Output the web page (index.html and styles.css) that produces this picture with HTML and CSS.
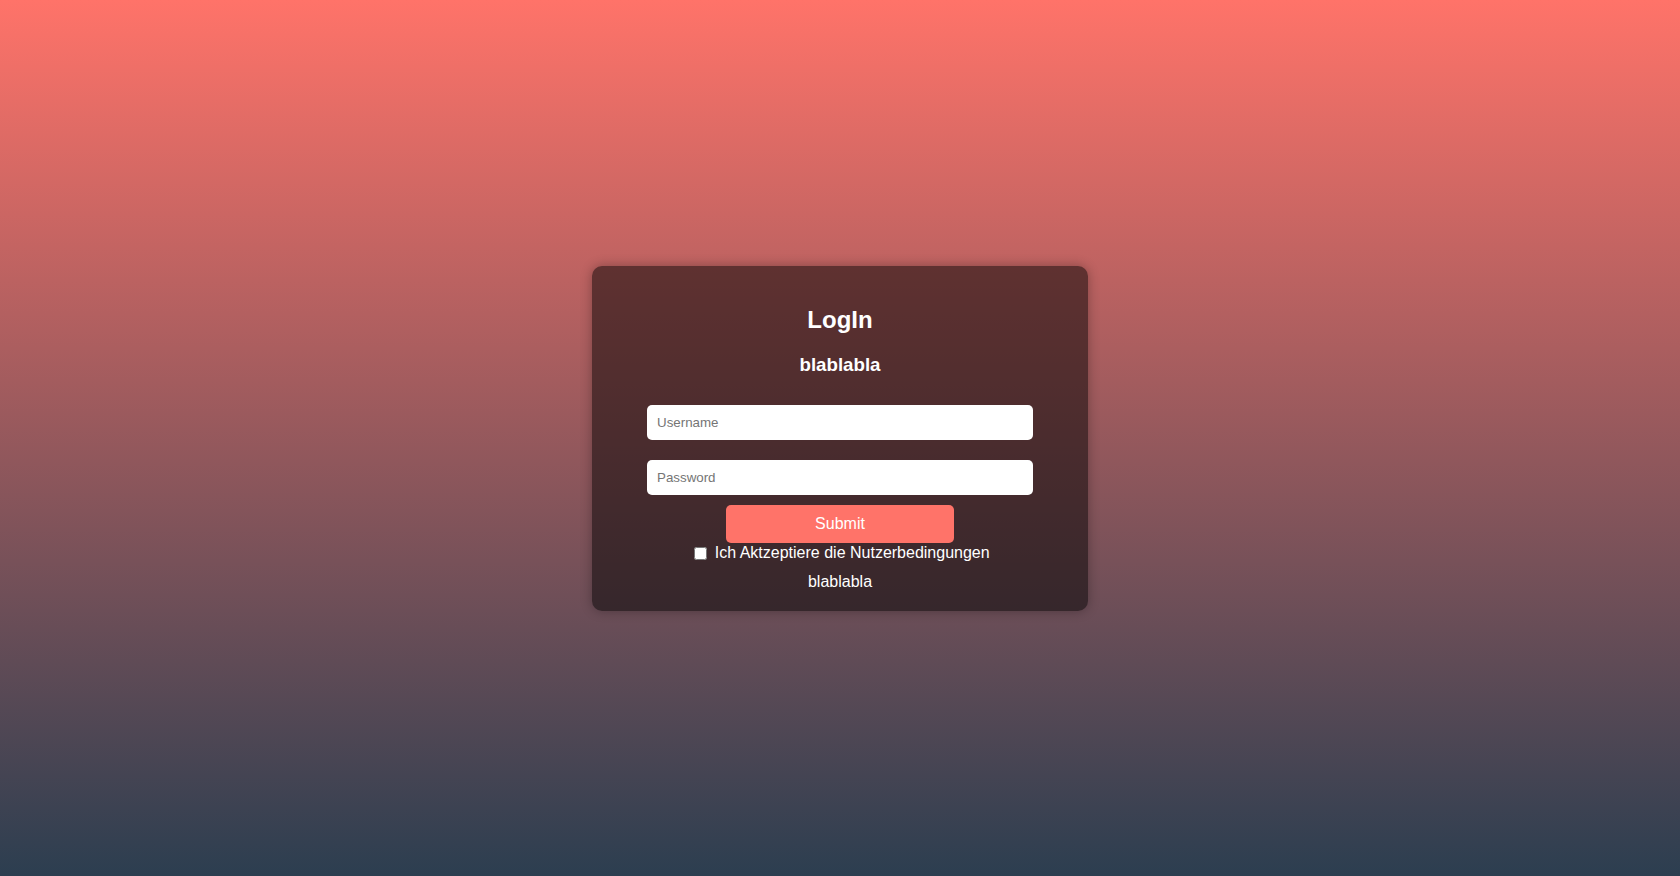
FILE: index.html
```html
<!DOCTYPE html>
<html lang="de">

<head>
  <meta charset="UTF-8">
  <title>LogIn</title>
  <link rel="stylesheet" href="styles.css">
</head>

<body class="login-body">

  <!-- Karte mit dem Formular -->
  <div class="login-card">
    <h2 class="login-title">LogIn</h2>
    <h3 class="login-subtitle">blablabla</h3>

    <form class="login-form" onsubmit="return false;">
      <input class="login-input" type="text" placeholder="Username">
      <input class="login-input login-input-last" type="password" placeholder="Password">
      <button class="login-btn" type="submit">Submit</button>
      <label class="login-terms">
        <input type="checkbox"> Ich Aktzeptiere die Nutzerbedingungen
      </label>
      <div class="login-note">blablabla</div>
    </form>
  </div>

</body>

</html>
```

FILE: styles.css
```css
/* Hintergrund mit Verlauf */
.login-body {
  margin: 0;
  height: 100vh;
  display: flex;
  align-items: center;
  justify-content: center;
  background: linear-gradient(to bottom, #ff7369, #2c3e50);
  font-family: 'Liberation Sans', Arial, sans-serif;
  color: #fff;
}

/* Karte */
.login-card {
  width: 456px;
  padding: 20px;
  background: rgba(0, 0, 0, 0.5);
  border-radius: 10px;
  box-shadow: 0 0 12px rgba(0, 0, 0, 0.3);
  text-align: center;
}

.login-title {
  font-size: 24px;
  margin: 20px 0;
}

.login-subtitle {
  font-size: 18.72px;
  margin: 20px 0 0 0;
}

.login-form {
  margin-top: 29px;
  display: flex;
  flex-direction: column;
  align-items: center;
}

.login-input {
  width: 386px;
  box-sizing: border-box;
  height: 35px;
  padding: 0 10px;
  border: none;
  border-radius: 5px;
  font-family: 'Liberation Sans', Arial, sans-serif;
  font-size: 13.33px;
  color: #333;
  background: #fff;
  margin-bottom: 20px;
}

.login-input::placeholder {
  color: #757575;
}

.login-input-last {
  margin-bottom: 10px;
}

.login-btn {
  width: 228px;
  height: 38px;
  border: none;
  border-radius: 5px;
  background-color: #ff7369;
  color: #fff;
  font-family: 'Liberation Sans', Arial, sans-serif;
  font-size: 16px;
  cursor: pointer;
}

.login-btn:hover {
  background-color: #f2645a;
}

.login-terms {
  font-size: 16px;
  line-height: 20px;
}

.login-terms input {
  margin: 3px 3px 3px 4px;
  vertical-align: -2px;
}

.login-note {
  font-size: 16px;
  margin-top: 10px;
}
```
